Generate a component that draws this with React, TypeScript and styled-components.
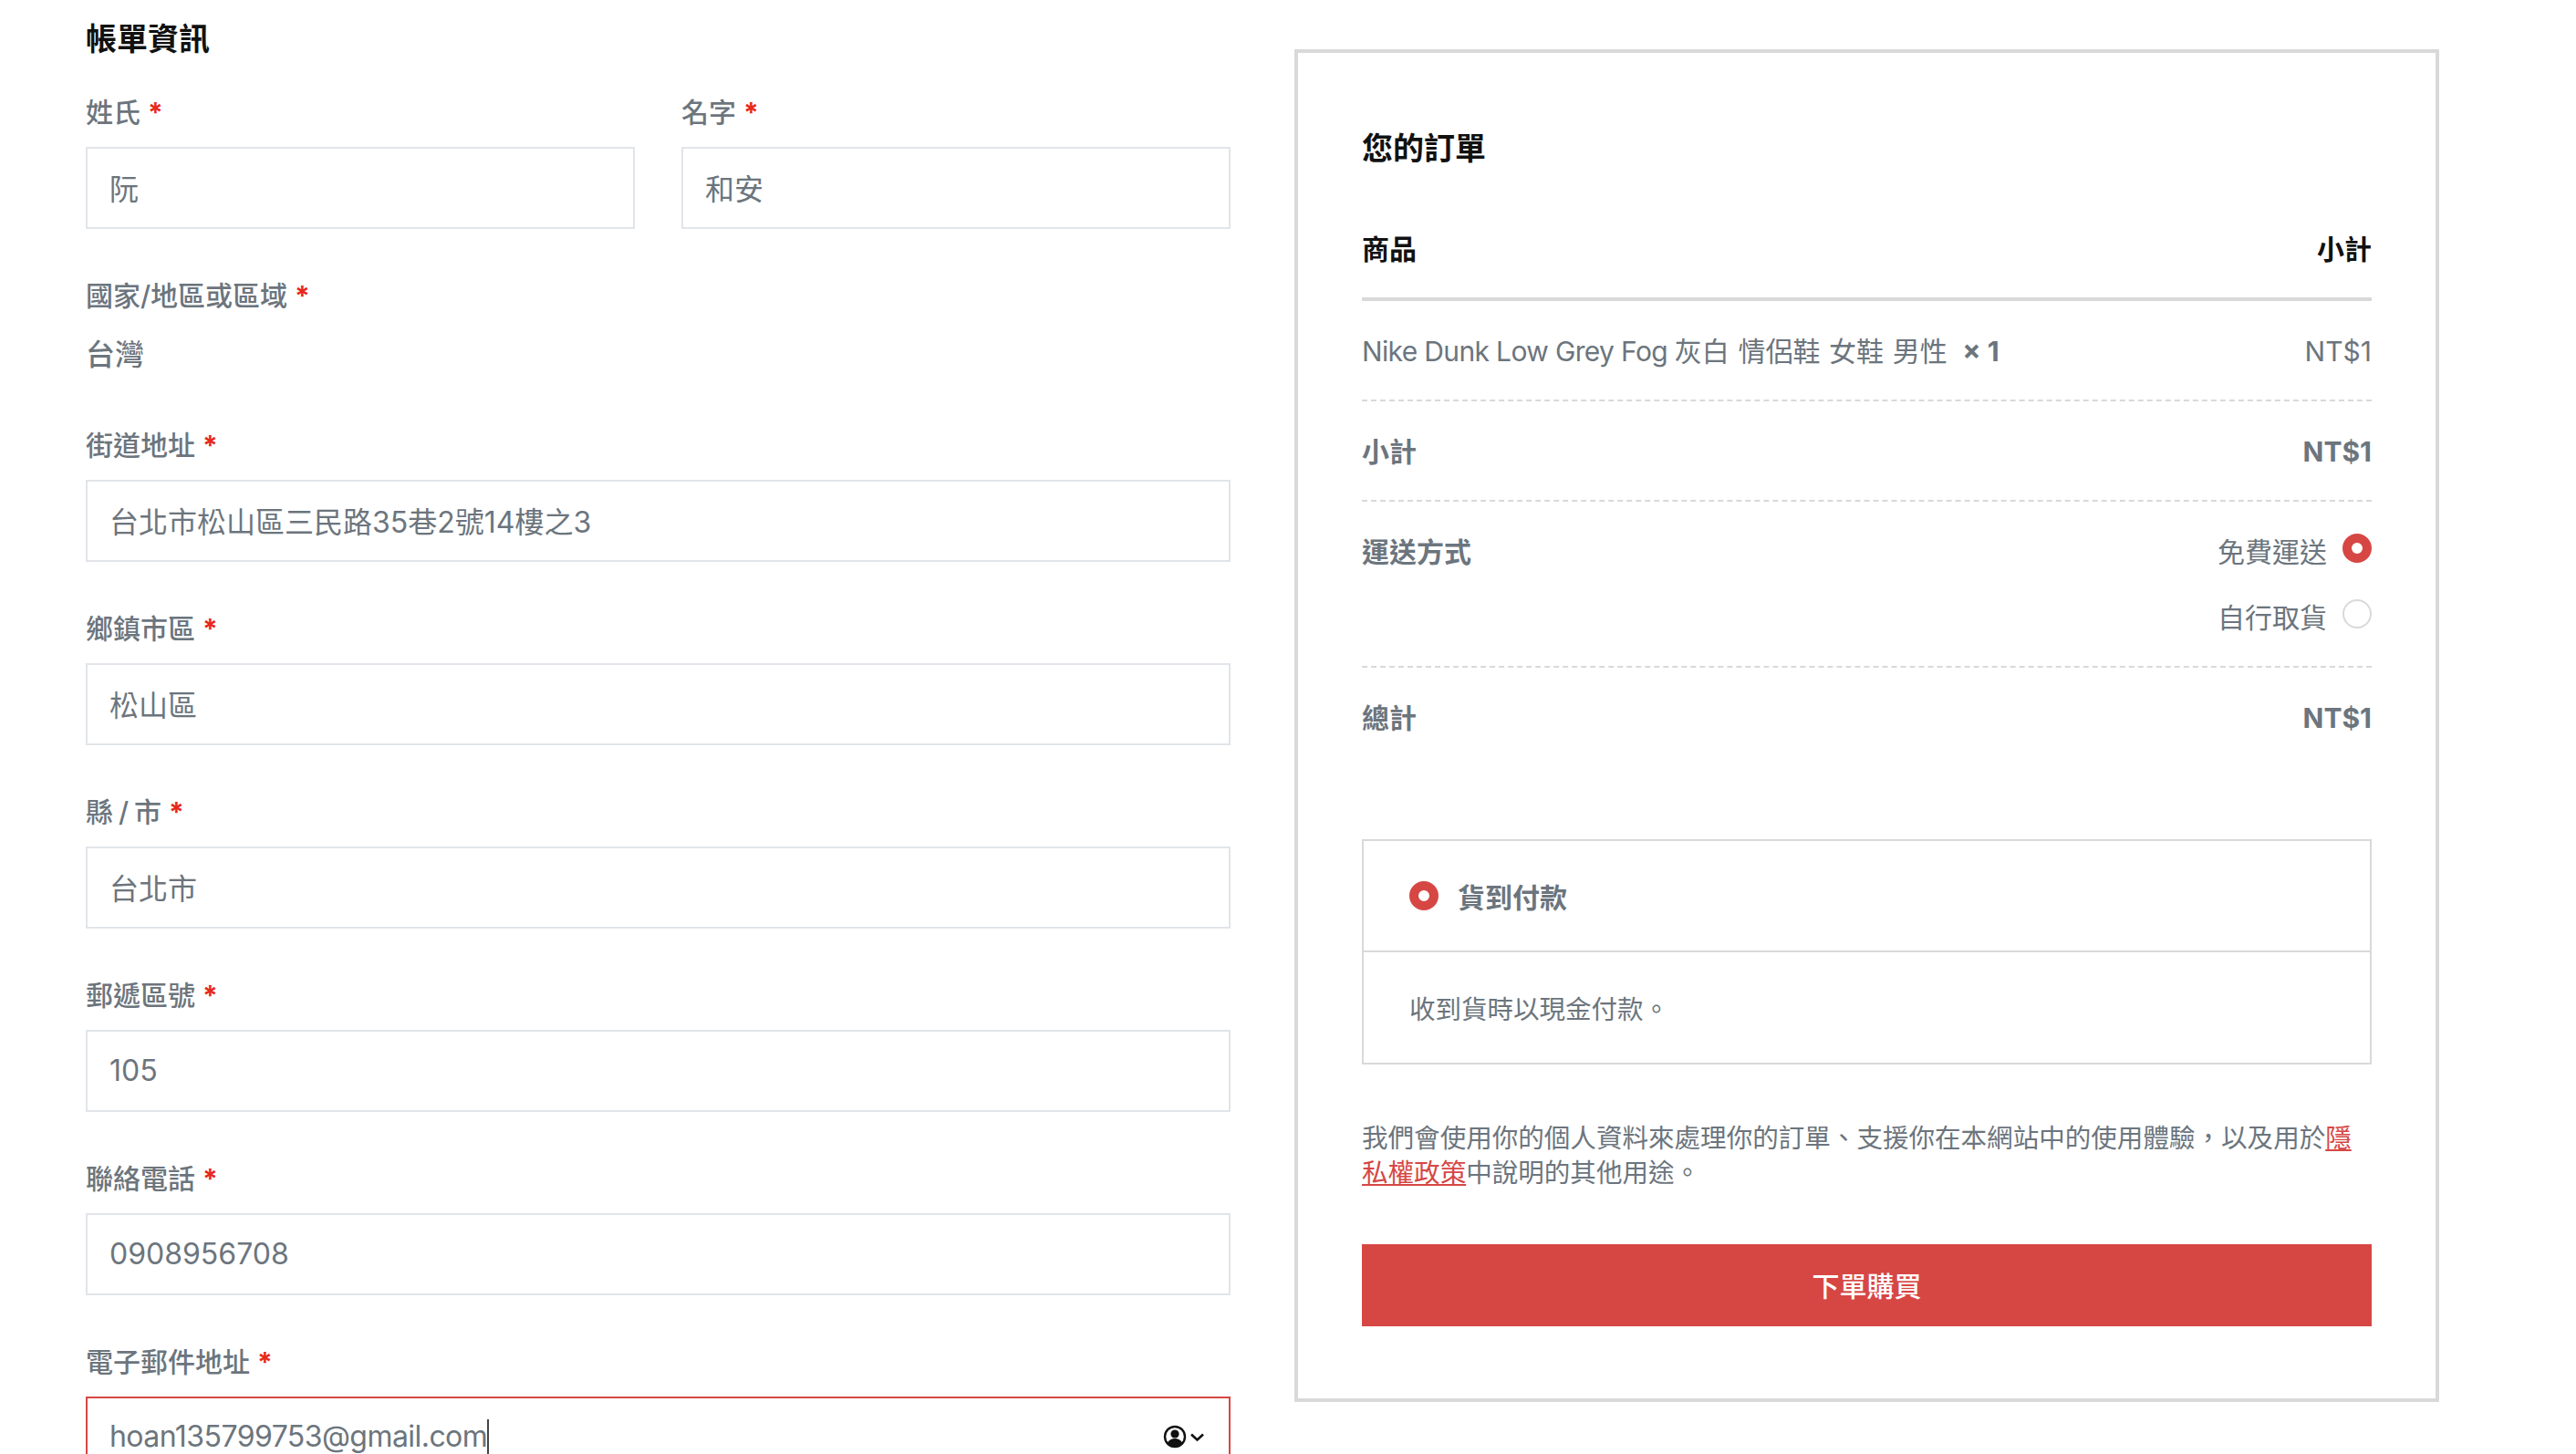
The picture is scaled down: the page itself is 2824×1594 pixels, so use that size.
import React from "react";
import styled, { createGlobalStyle } from "styled-components";

const Global = createGlobalStyle`
  html, body { margin: 0; padding: 0; background: #fff; }
  body { height: 1594px; overflow: hidden; font-family: Inter, "Noto Sans CJK TC", sans-serif; color: #6c757d; }
  * { box-sizing: border-box; }
`;

const Page = styled.div`
  display: flex;
  align-items: flex-start;
  gap: 70px;
  width: 2824px;
  height: 1594px;
  padding-left: 94px;
  overflow: hidden;
`;

const Billing = styled.section`
  width: 1255px;
  flex: none;
  padding-top: 23px;
`;

const Heading = styled.h3`
  margin: 0;
  font-size: 34px;
  line-height: 40px;
  font-weight: 700;
  color: #111;
`;

const NameRow = styled.div`
  display: grid;
  grid-template-columns: 602px 602px;
  gap: 51px;
  margin-top: 38px;
`;

const Field = styled.div`
  padding-bottom: 51px;
`;

const Label = styled.label`
  display: block;
  font-size: 30px;
  line-height: 44px;
  font-weight: 500;
  word-spacing: -2px;
  color: #6c757d;
  margin-bottom: 16px;
`;

const Star = styled.span`
  color: #e8291c;
  font-weight: 700;
  margin-left: 8px;
`;

const Input = styled.input`
  display: block;
  width: 100%;
  height: 90px;
  padding: 0 24px 2px;
  border: 2px solid #e1e5e9;
  border-radius: 0;
  outline: none;
  background: #fff;
  font: 400 32px/44px Inter, "Noto Sans CJK TC", sans-serif;
  color: #6c757d;
`;

const FocusedInput = styled.div`
  display: flex;
  align-items: center;
  height: 90px;
  padding: 0 24px 2px;
  border: 2px solid #d64744;
  font-size: 32px;
  line-height: 44px;
  letter-spacing: -0.55px;
  color: #6c757d;
`;

const Caret = styled.span`
  flex: none;
  width: 2px;
  height: 38px;
  background: #444;
`;

const AutofillIcon = styled.svg`
  margin-left: auto;
  margin-right: 2px;
  flex: none;
`;

const StaticValue = styled.div`
  padding: 5px 0 4px;
  font-size: 32px;
  line-height: 44px;
  font-weight: 500;
  color: #6c757d;
`;

const Card = styled.aside`
  flex: none;
  width: 1255px;
  margin-top: 54px;
  border: 4px solid #d9d9d9;
  padding: 83px 70px 79px;
`;

const OrderTitle = styled.h3`
  margin: 0;
  font-size: 34px;
  line-height: 44px;
  font-weight: 700;
  color: #111;
`;

const TableHead = styled.div`
  display: flex;
  justify-content: space-between;
  padding: 66px 0 31px;
  border-bottom: 4px solid #d9d9d9;
  font-size: 30px;
  line-height: 44px;
  font-weight: 700;
  color: #111;
`;

const Row = styled.div<{ $last?: boolean }>`
  display: flex;
  justify-content: space-between;
  align-items: flex-start;
  padding: 33px 0 31px;
  border-bottom: ${(p) => (p.$last ? "none" : "2px dashed #d9d9d9")};
  font-size: 30px;
  line-height: 44px;
`;

const Latin = styled.span`
  letter-spacing: -0.65px;
`;

const Variant = styled.span`
  word-spacing: 1.2px;
`;

const Qty = styled.strong`
  margin-left: 7px;
  font-weight: 700;
`;

const RowLabel = styled.span`
  font-weight: 700;
`;

const Amount = styled.span`
  font-weight: 700;
`;

const Options = styled.div`
  display: flex;
  flex-direction: column;
  gap: 28px;
`;

const Option = styled.div`
  display: flex;
  align-items: flex-start;
  gap: 17px;
`;

const Radio = styled.span<{ $on?: boolean; $inline?: boolean }>`
  flex: none;
  display: block;
  width: 32px;
  height: 32px;
  margin-top: ${(p) => (p.$inline ? "0" : "2px")};
  border-radius: 50%;
  background: #fff;
  border: ${(p) => (p.$on ? "10px solid #d64744" : "2px solid #d9d9d9")};
`;

const PayBox = styled.div`
  margin-top: 80px;
  border: 2px solid #d9d9d9;
`;

const PayHead = styled.div`
  display: flex;
  align-items: center;
  gap: 21px;
  height: 122px;
  padding-left: 50px;
  border-bottom: 2px solid #d9d9d9;
  font-size: 30px;
  font-weight: 700;
`;

const PayBody = styled.div`
  display: flex;
  align-items: center;
  height: 121px;
  padding-left: 50px;
  font-size: 28.5px;
`;

const Privacy = styled.p`
  margin: 62px 0 59px;
  font-size: 28.55px;
  line-height: 38px;
`;

const PrivacyLink = styled.a`
  color: #d64744;
  text-decoration: underline;
`;

const PlaceOrder = styled.button`
  display: block;
  width: 100%;
  height: 90px;
  padding: 2px 0 0;
  border: none;
  background: #d64744;
  color: #fff;
  font: 500 30px/44px Inter, "Noto Sans CJK TC", sans-serif;
`;

const Req = () => <Star>*</Star>;

const FIELDS: [string, string][] = [
  ["街道地址", "台北市松山區三民路35巷2號14樓之3"],
  ["鄉鎮市區", "松山區"],
  ["縣 / 市", "台北市"],
  ["郵遞區號", "105"],
  ["聯絡電話", "0908956708"],
];

export default function App() {
  return (
    <>
      <Global />
      <Page>
        <Billing>
          <Heading>帳單資訊</Heading>
          <NameRow>
            <Field>
              <Label>姓氏<Req /></Label>
              <Input readOnly value="阮" />
            </Field>
            <Field>
              <Label>名字<Req /></Label>
              <Input readOnly value="和安" />
            </Field>
          </NameRow>
          <Field>
            <Label>國家/地區或區域<Req /></Label>
            <StaticValue>台灣</StaticValue>
          </Field>
          {FIELDS.map(([label, value]) => (
            <Field key={label}>
              <Label>{label}<Req /></Label>
              <Input readOnly value={value} />
            </Field>
          ))}
          <Field>
            <Label>電子郵件地址<Req /></Label>
            <FocusedInput>
              <span>hoan135799753@gmail.com</span>
              <Caret />
              <AutofillIcon width="46" height="26" viewBox="0 0 46 26" fill="none">
                <circle cx="13" cy="13" r="11" stroke="#111" strokeWidth="2.4" />
                <circle cx="13" cy="10" r="4.6" fill="#111" />
                <path d="M4.5 20c2-3.6 5-5 8.5-5s6.500 1.400 8.500 5c-2.200 2.600-5.200 4-8.500 4s-6.300-1.400-8.500-4z" fill="#111" />
                <path d="M31 10.500l6.500 6 6.500-6" stroke="#111" strokeWidth="2.600" />
              </AutofillIcon>
            </FocusedInput>
          </Field>
        </Billing>
        <Card>
          <OrderTitle>您的訂單</OrderTitle>
          <TableHead>
            <span>商品</span>
            <span>小計</span>
          </TableHead>
          <Row>
            <span><Latin>Nike Dunk Low Grey Fog </Latin><Variant>灰白 情侶鞋 女鞋 男性 </Variant><Qty>× 1</Qty></span>
            <span>NT$1</span>
          </Row>
          <Row>
            <RowLabel>小計</RowLabel>
            <Amount>NT$1</Amount>
          </Row>
          <Row>
            <RowLabel>運送方式</RowLabel>
            <Options>
              <Option>免費運送<Radio $on /></Option>
              <Option>自行取貨<Radio /></Option>
            </Options>
          </Row>
          <Row $last>
            <RowLabel>總計</RowLabel>
            <Amount>NT$1</Amount>
          </Row>
          <PayBox>
            <PayHead><Radio $on $inline />貨到付款</PayHead>
            <PayBody>收到貨時以現金付款。</PayBody>
          </PayBox>
          <Privacy>
            我們會使用你的個人資料來處理你的訂單、支援你在本網站中的使用體驗，以及用於<PrivacyLink>隱私權政策</PrivacyLink>中說明的其他用途。
          </Privacy>
          <PlaceOrder>下單購買</PlaceOrder>
        </Card>
      </Page>
    </>
  );
}
